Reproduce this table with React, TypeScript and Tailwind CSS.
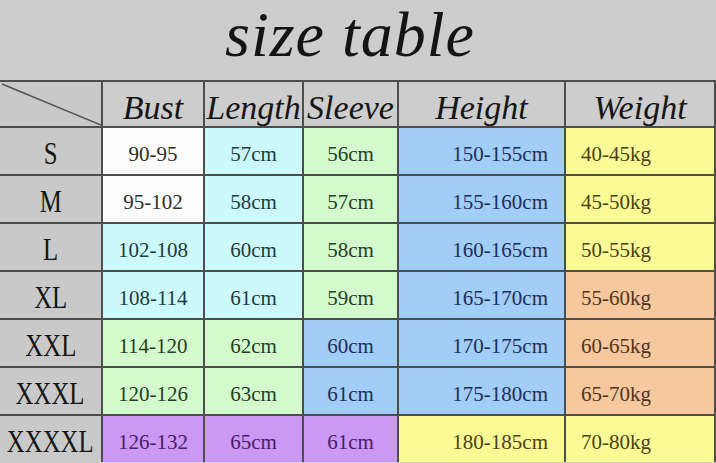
type Tone = 'white' | 'cyan' | 'green' | 'blue' | 'yellow' | 'orange' | 'purple';

const tones: Record<Tone, string> = {
  white: 'bg-[#fdfdfd] text-[#2e2e2e]',
  cyan: 'bg-[#ccfafc] text-[#1e3b40]',
  green: 'bg-[#d4fbcc] text-[#213f25]',
  blue: 'bg-[#a2cdf6] text-[#1b2f5c]',
  yellow: 'bg-[#fbfb96] text-[#4a4216]',
  orange: 'bg-[#f5c89e] text-[#55341a]',
  purple: 'bg-[#cb98f3] text-[#4a1c6b]',
};

interface SizeRow {
  size: string;
  bust: [string, Tone];
  length: [string, Tone];
  sleeve: [string, Tone];
  height: [string, Tone];
  weight: [string, Tone];
}

const rows: SizeRow[] = [
  { size: 'S', bust: ['90-95', 'white'], length: ['57cm', 'cyan'], sleeve: ['56cm', 'green'], height: ['150-155cm', 'blue'], weight: ['40-45kg', 'yellow'] },
  { size: 'M', bust: ['95-102', 'white'], length: ['58cm', 'cyan'], sleeve: ['57cm', 'green'], height: ['155-160cm', 'blue'], weight: ['45-50kg', 'yellow'] },
  { size: 'L', bust: ['102-108', 'cyan'], length: ['60cm', 'cyan'], sleeve: ['58cm', 'green'], height: ['160-165cm', 'blue'], weight: ['50-55kg', 'yellow'] },
  { size: 'XL', bust: ['108-114', 'cyan'], length: ['61cm', 'cyan'], sleeve: ['59cm', 'green'], height: ['165-170cm', 'blue'], weight: ['55-60kg', 'orange'] },
  { size: 'XXL', bust: ['114-120', 'green'], length: ['62cm', 'green'], sleeve: ['60cm', 'blue'], height: ['170-175cm', 'blue'], weight: ['60-65kg', 'orange'] },
  { size: 'XXXL', bust: ['120-126', 'green'], length: ['63cm', 'green'], sleeve: ['61cm', 'blue'], height: ['175-180cm', 'blue'], weight: ['65-70kg', 'orange'] },
  { size: 'XXXXL', bust: ['126-132', 'purple'], length: ['65cm', 'purple'], sleeve: ['61cm', 'purple'], height: ['180-185cm', 'yellow'], weight: ['70-80kg', 'yellow'] },
];

const headers = ['Bust', 'Length', 'Sleeve', 'Height', 'Weight'];

function Cell({ value, tone, align = 'center' }: { value: string; tone: Tone; align?: 'center' | 'right' | 'left' }) {
  const place =
    align === 'right' ? 'justify-end pr-[16px]' : align === 'left' ? 'justify-start pl-[15px]' : 'justify-center';
  return (
    <div className={`flex h-[46px] items-center pt-[6px] text-[21px] leading-none whitespace-nowrap ${place} ${tones[tone]}`}>
      {value}
    </div>
  );
}

export default function App() {
  return (
    <div className="h-[463px] w-[716px] overflow-hidden bg-[#cdcdcd] font-['Liberation_Serif',serif]">
      <div className="flex h-[80px] justify-center pt-[3px] pr-[16px]">
        <h1 className="text-[64px] leading-none italic tracking-[1px] text-[#141414]">size table</h1>
      </div>

      <div className="grid grid-cols-[101px_100px_97px_93px_165px_1fr] gap-[2px] border-t-2 border-r-2 border-[#4d4d4d] bg-[#4d4d4d]">
        <div className="h-[44px] bg-[#c9c9c9]">
          <svg viewBox="0 0 101 44" preserveAspectRatio="none" className="h-full w-full">
            <line x1="2" y1="2" x2="101" y2="43" stroke="#555" strokeWidth="1.5" />
          </svg>
        </div>
        {headers.map((h) => (
          <div
            key={h}
            className="flex h-[44px] justify-center bg-[#cdcdcd] pt-[9px] text-[34px] leading-none italic whitespace-nowrap text-[#161616]"
          >
            {h}
          </div>
        ))}

        {rows.map((r) => (
          <div key={r.size} className="contents">
            <div className="flex h-[46px] items-center justify-center bg-[#c9c9c9] pt-[5px] text-[31px] leading-none text-[#161616]">
              <span className="inline-block scale-x-[0.8]">{r.size}</span>
            </div>
            <Cell value={r.bust[0]} tone={r.bust[1]} />
            <Cell value={r.length[0]} tone={r.length[1]} />
            <Cell value={r.sleeve[0]} tone={r.sleeve[1]} />
            <Cell value={r.height[0]} tone={r.height[1]} align="right" />
            <Cell value={r.weight[0]} tone={r.weight[1]} align="left" />
          </div>
        ))}
      </div>
    </div>
  );
}
